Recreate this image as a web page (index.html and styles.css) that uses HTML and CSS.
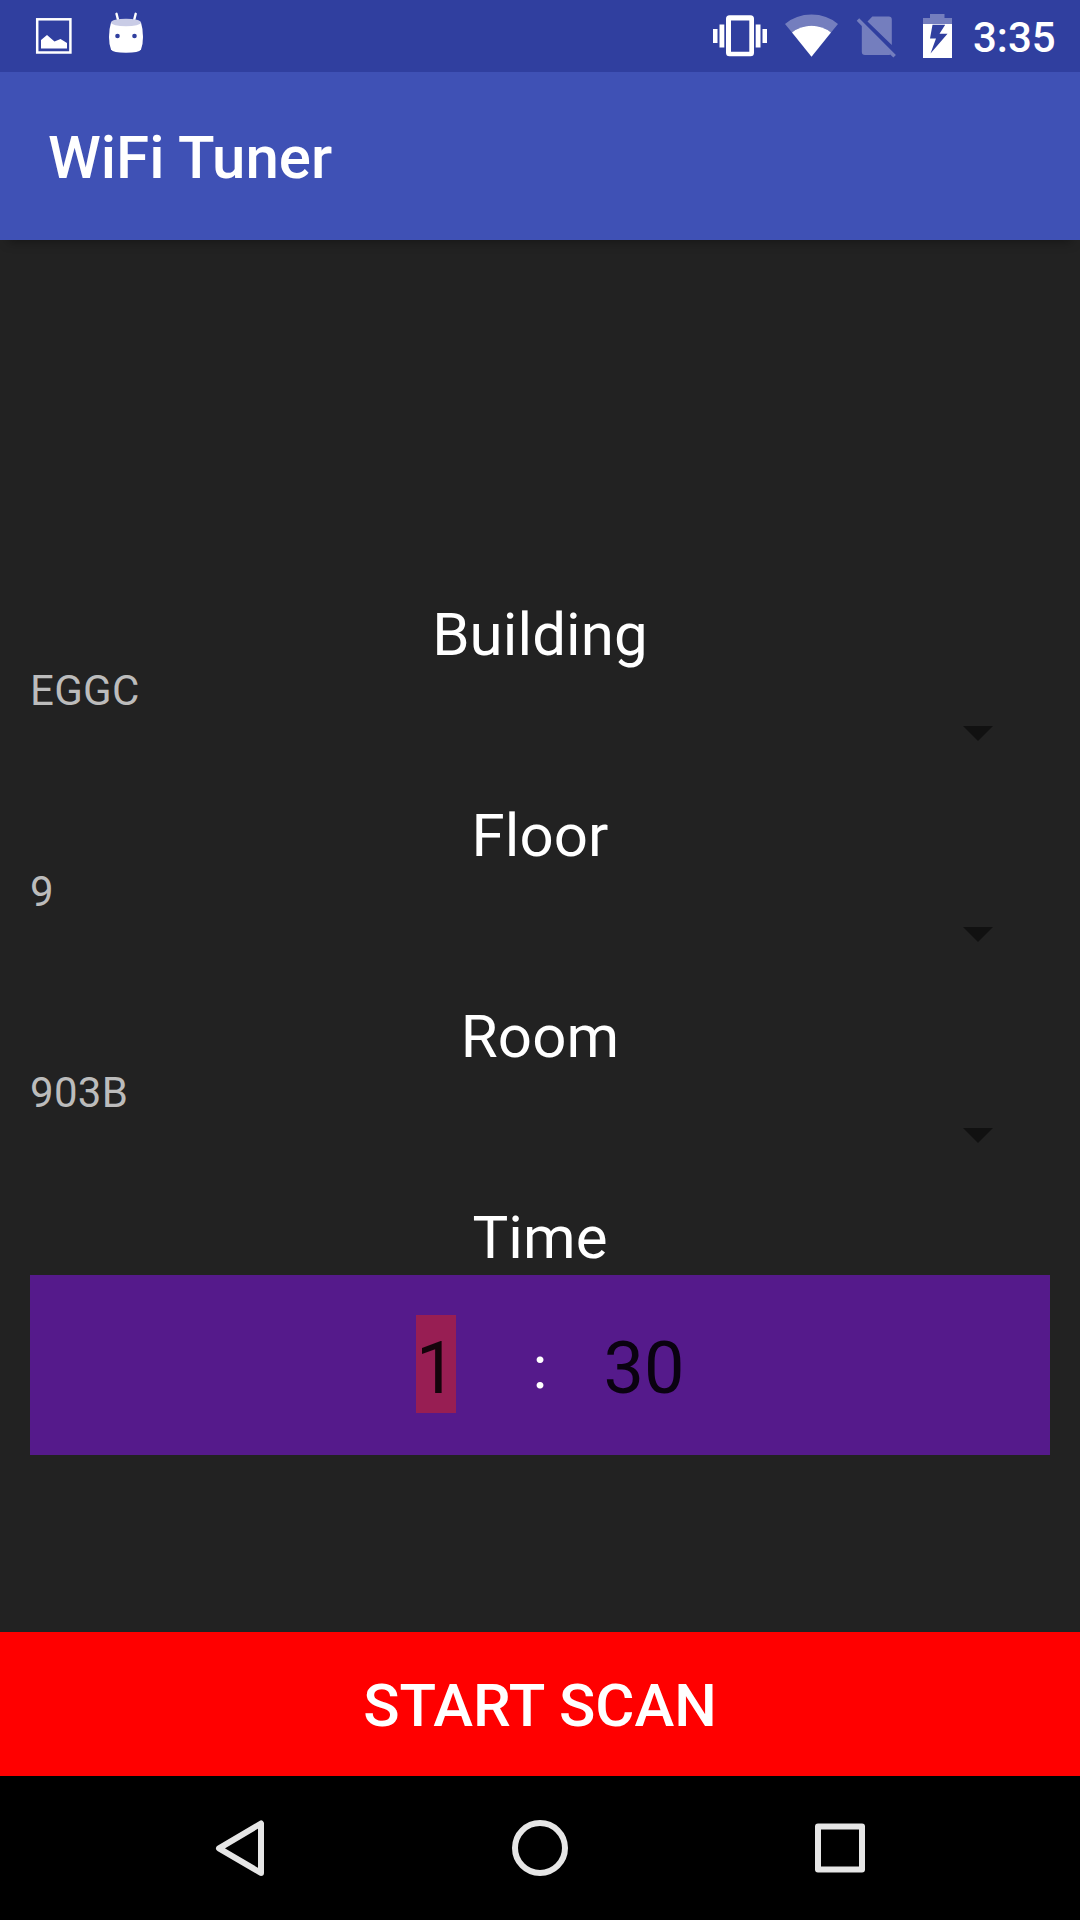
FILE: index.html
```html
<!DOCTYPE html>
<html lang="en">
<head>
<meta charset="utf-8">
<title>WiFi Tuner</title>
<link rel="stylesheet" href="styles.css">
</head>
<body>
<div class="screen">
  <header class="status-bar">
    <svg class="status-icons" width="150" height="72" viewBox="0 0 150 72">
      <rect x="37.200" y="19.300" width="33.200" height="33.200" fill="none" stroke="#fff" stroke-width="2.500"/>
      <path d="M41 48.500V40l6-5 7.500 6.500 6-2.500L67 43v5.500z" fill="#fff"/>
      <path d="M116.500 13.800l2 8M135.700 13.800l-2 8" stroke="#fff" stroke-width="2.400" stroke-linecap="round"/>
      <path d="M111 22.500H141Q143 29 143 37Q143 44 141 49.500Q139 52.800 126 52.800Q113 52.800 111 49.500Q109 44 109 37Q109 29 111 22.500z" fill="#fff"/>
      <ellipse cx="126" cy="22.500" rx="15" ry="3.800" fill="#c9cce6"/>
      <circle cx="117.500" cy="36" r="2.300" fill="#303f9f"/>
      <circle cx="134.500" cy="36" r="2.300" fill="#303f9f"/>
    </svg>
    <svg class="status-icons" width="260" height="72" viewBox="700 0 260 72">
      <g fill="#fff">
        <path d="M713 29h4.500v14H713zM719.500 24.500h4.800v23h-4.800zM755.700 24.500h4.800v23h-4.800zM762.500 29h4.500v14h-4.500z"/>
        <path fill-rule="evenodd" d="M729.500 15.300h21a3.500 3.500 0 0 1 3.500 3.500v34a3.500 3.500 0 0 1-3.500 3.500h-21a3.500 3.500 0 0 1-3.500-3.500v-34a3.500 3.500 0 0 1 3.500-3.500zM731 20.500v31.200h18.300V20.500z"/>
        <path fill-opacity=".33" d="M792 32.500L785 24Q796 14.500 811.500 14.500T838 24L831 32.500Q822.500 25.800 811.500 25.800T792 32.500z"/>
        <path d="M811.500 56.800L792 32.500Q800.500 25.800 811.500 25.800T831 32.500z"/>
        <path fill-opacity=".33" d="M867.500 21.500l4.800-5h16.500a3 3 0 0 1 3 3v25.500zM859.200 18.300l36.700 36.800-2.500 2.500-3.200-3.200q-.7.600-1.700.6H865a3.200 3.200 0 0 1-3.200-3.200V26l-5.100-5.200z"/>
        <path fill-opacity=".33" d="M923 24v-6h7v-4h14.500v4h7.500v6z"/>
        <path fill-rule="evenodd" d="M923 24h29v34h-29zM932.500 24.800l-2.500 13.700h6l-5.500 15 17-19.800h-8l5.700-8.900z"/>
      </g>
    </svg>
    <span class="clock">3:35</span>
  </header>
  <div class="app-bar"><h1 class="app-title">WiFi Tuner</h1></div>
  <main class="content">
    <section class="field">
      <h2 class="label">Building</h2>
      <div class="spinner"><span>EGGC</span><i class="caret"></i></div>
    </section>
    <section class="field">
      <h2 class="label">Floor</h2>
      <div class="spinner"><span>9</span><i class="caret"></i></div>
    </section>
    <section class="field">
      <h2 class="label">Room</h2>
      <div class="spinner"><span>903B</span><i class="caret"></i></div>
    </section>
    <h2 class="label">Time</h2>
    <div class="time-panel">
      <span class="digits"><span class="selected">1</span></span>
      <span class="colon">:</span>
      <span class="digits">30</span>
    </div>
  </main>
  <button class="scan">START SCAN</button>
  <nav class="nav-bar">
    <svg width="1080" height="144" viewBox="0 1776 1080 144" fill="none" stroke="#e6e6e6" stroke-width="6" stroke-linejoin="round">
      <path d="M261 1823.500v49.500L219 1848.300z"/>
      <circle cx="540" cy="1848" r="25"/>
      <rect x="818" y="1826.500" width="44" height="43"/>
    </svg>
  </nav>
</div>
</body>
</html>
```
FILE: styles.css
```css
* { box-sizing: border-box; margin: 0; padding: 0; }
body { font-family: Roboto, sans-serif; background: #222; color: #fff; }
.screen { display: flex; flex-direction: column; width: 1080px; height: 1920px; overflow: hidden; }
.status-bar { display: flex; height: 72px; background: #303f9f; }
.status-icons { display: block; flex: none; }
.status-icons + .status-icons { margin-left: 550px; }
.clock { margin-left: 13px; font-size: 42px; font-weight: 500; line-height: 75px; }
.app-bar { display: flex; align-items: center; height: 168px; padding: 4px 0 0 48px; background: #3f51b5; box-shadow: 0 10px 10px -8px rgba(0, 0, 0, .35); }
.app-title { font-size: 60px; font-weight: 500; line-height: 70px; }
.content { flex: 1; padding: 352px 30px 0; }
.field { height: 201px; }
.label { height: 80px; font-size: 60px; font-weight: 400; line-height: 86px; letter-spacing: .1px; text-align: center; }
.spinner { display: flex; justify-content: space-between; align-items: flex-start; padding-right: 57px; font-size: 42px; line-height: 38px; letter-spacing: .3px; color: #bcbcbc; }
.caret { width: 30px; height: 15px; margin-top: 54px; background: #111; clip-path: polygon(0 0, 100% 0, 50% 100%); }
.time-panel { display: grid; grid-template-columns: repeat(3, 104px); justify-content: center; height: 180px; padding-top: 40px; background: #551a8b; text-align: center; }
.digits { font-size: 72px; line-height: 107px; color: #0a0210; }
.selected { display: inline-block; width: 40px; height: 98px; background: #981e53; color: #14040b; }
.colon { font-size: 60px; line-height: 106px; }
.scan { height: 144px; padding-top: 4px; border: 0; background: #f00; color: #fff; font: 500 60px/140px Roboto, sans-serif; }
.nav-bar { height: 144px; background: #000; }
.nav-bar svg { display: block; }
```
